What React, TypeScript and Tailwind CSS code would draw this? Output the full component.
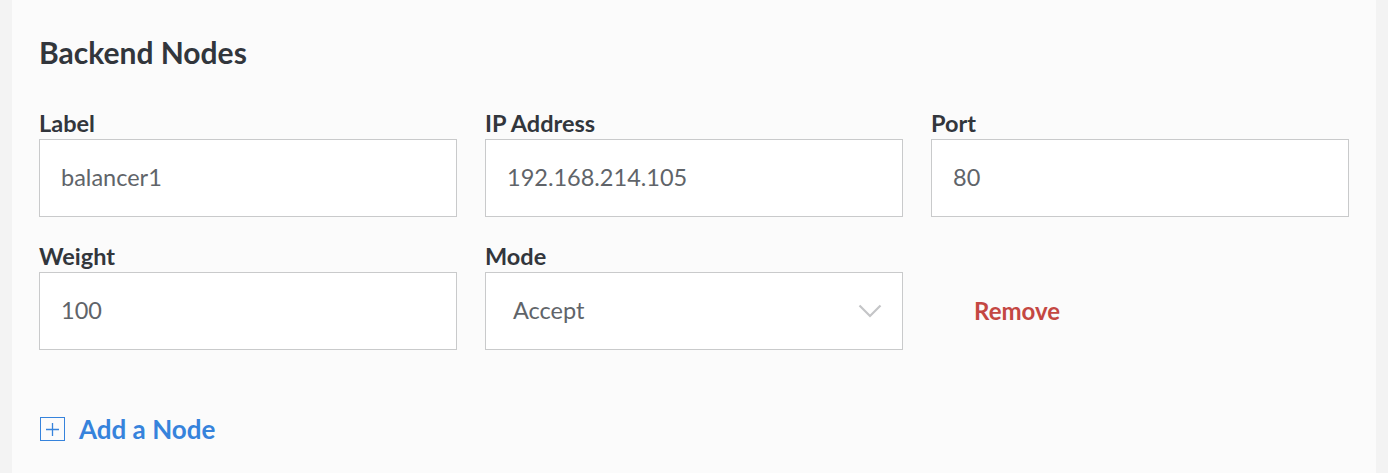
import React from 'react';

const font = { fontFamily: 'Lato, "Noto Sans", sans-serif' };

const Field: React.FC<{ label: string; value: string; select?: boolean }> = ({ label, value, select }) => (
  <div className="flex flex-col">
    <label className="h-[24px] mb-[4px] text-[23.5px] leading-[24px] font-bold text-[#32363c]">{label}</label>
    <div className="relative h-[78px] border border-[#c9cacb] bg-white flex items-center">
      <span className={select ? 'pl-[27px] text-[23.5px] text-[#606469]' : 'pl-[21px] text-[23.5px] text-[#606469]'}>{value}</span>
      {select && (
        <svg className="absolute right-[20px] top-[30px]" width="24" height="16" viewBox="0 0 24 16" fill="none">
          <path d="M1.5 2.5 L12 13 L22.5 2.5" stroke="#c4c5c7" strokeWidth="2.2" />
        </svg>
      )}
    </div>
  </div>
);

export default function App() {
  return (
    <div className="w-[1388px] h-[473px] bg-[#f3f3f3] flex" style={font}>
      <div className="ml-[12px] w-[1364px] h-full bg-[#fbfbfb] px-[27px] pt-[34px] overflow-hidden">
        <h2 className="text-[30px] leading-[36px] font-bold text-[#32363c]">Backend Nodes</h2>
        <div className="mt-[41px] grid grid-cols-3 gap-x-[28px] gap-y-[27px]">
          <Field label="Label" value="balancer1" />
          <Field label="IP Address" value="192.168.214.105" />
          <Field label="Port" value="80" />
          <Field label="Weight" value="100" />
          <Field label="Mode" value="Accept" select />
          <div className="flex items-end">
            <button className="h-[78px] pl-[43px] text-[24px] font-bold text-[#c44742]">Remove</button>
          </div>
        </div>
        <button className="mt-[64px] flex items-center gap-[14px] text-[#3683dc]">
          <span className="w-[25px] h-[24px] border-[1.5px] border-[#3683dc] flex items-center justify-center ml-[1px]">
            <svg width="13" height="13" viewBox="0 0 13 13">
              <path d="M6.5 0 V13 M0 6.5 H13" stroke="#3683dc" strokeWidth="1.3" />
            </svg>
          </span>
          <span className="text-[26px] leading-[30px] font-bold">Add a Node</span>
        </button>
      </div>
    </div>
  );
}
